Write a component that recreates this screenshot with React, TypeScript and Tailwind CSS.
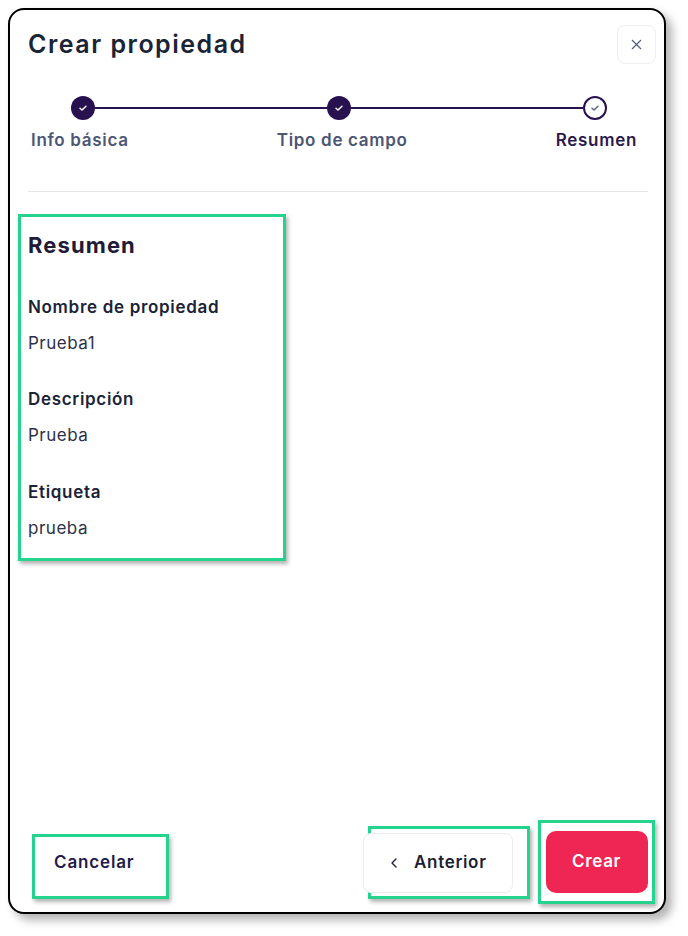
import { X, ChevronLeft } from 'lucide-react';

const font = { fontFamily: 'Inter, "Noto Sans", sans-serif' };

function Check({ className }: { className: string }) {
  return (
    <svg viewBox="0 0 12 12" className={className} fill="none">
      <path d="M3 6.2 5 8.1 9 4.2" stroke="currentColor" strokeWidth="1.4" strokeLinecap="round" strokeLinejoin="round" />
    </svg>
  );
}

function Stepper() {
  return (
    <div className="mt-[32px]">
      <div className="flex items-center pl-[43px] pr-[41px]">
        <div className="w-6 h-6 rounded-full bg-[#27124f] flex items-center justify-center text-white">
          <Check className="w-3 h-3" />
        </div>
        <div className="flex-1 h-[2px] bg-[#27124f]" />
        <div className="w-6 h-6 rounded-full bg-[#27124f] flex items-center justify-center text-white">
          <Check className="w-3 h-3" />
        </div>
        <div className="flex-1 h-[2px] bg-[#27124f]" />
        <div className="w-6 h-6 rounded-full border-2 border-[#27124f] bg-white flex items-center justify-center text-[#5b6380]">
          <Check className="w-3 h-3" />
        </div>
      </div>
      <div className="flex justify-between pl-[3px] pr-[11px] mt-[8px] text-[17px] font-semibold leading-6 tracking-[0.04em]">
        <span className="text-[#4d5673]">Info básica</span>
        <span className="text-[#4d5673]">Tipo de campo</span>
        <span className="text-[#2a1a4a]">Resumen</span>
      </div>
    </div>
  );
}

function Field({ label, value }: { label: string; value: string }) {
  return (
    <div className="mt-[36px]">
      <div className="text-[17px] leading-6 font-semibold text-[#1c2337] tracking-[0.04em]">{label}</div>
      <div className="mt-3 text-[17px] leading-6 text-[#2c3148] tracking-[0.03em]">{value}</div>
    </div>
  );
}

export default function App() {
  return (
    <div className="min-h-[936px] bg-white pt-2 pl-2" style={font}>
      <div className="w-[658px] h-[906px] border-2 border-black rounded-2xl bg-white shadow-[6px_6px_10px_rgba(0,0,0,0.3)] flex flex-col">
        <div className="flex-1 pl-[18px] pr-[16px] pt-[15px]">
          <div className="flex items-center justify-between">
            <h1 className="text-[25px] leading-[39px] font-semibold text-[#1a2436] tracking-[0.06em]">Crear propiedad</h1>
            <button className="w-[39px] h-[39px] -mr-2 rounded-lg border border-[#eeeeee] flex items-center justify-center text-[#4b5b82]">
              <X size={17} strokeWidth={1.6} />
            </button>
          </div>

          <Stepper />

          <div className="mt-[39px] h-px bg-[#e4e4e7]" />

          <div className="mt-[22px] -ml-[10px] w-[268px] border-[3px] border-[#24d48e] shadow-[2px_3px_4px_rgba(0,0,0,0.3)] pl-[7px] pt-[14px] pb-[18px]">
            <h2 className="text-[22px] leading-7 font-bold text-[#221b36] tracking-[0.05em]">Resumen</h2>
            <Field label="Nombre de propiedad" value="Prueba1" />
            <div className="-mt-1">
              <Field label="Descripción" value="Prueba" />
            </div>
            <div className="-mt-[3px]">
              <Field label="Etiqueta" value="prueba" />
            </div>
          </div>
        </div>

        <div className="flex items-center justify-between pl-[22px] pr-[9px] pb-[8px]">
          <div className="w-[137px] h-[65px] border-[3px] border-[#24d48e] shadow-[2px_3px_4px_rgba(0,0,0,0.3)] pl-[19px] pt-[13px] mt-[8px]">
            <span className="text-[17px] leading-6 font-semibold text-[#231a4a] tracking-[0.05em]">Cancelar</span>
          </div>
          <div className="flex items-center gap-2">
            <div className="w-[162px] h-[73px] border-[3px] border-[#24d48e] shadow-[2px_3px_4px_rgba(0,0,0,0.3)] flex items-center">
              <button className="-ml-2 mt-[2px] w-[150px] h-[60px] rounded-lg border border-[#ececec] bg-white flex items-center pl-[22px] text-[#1c1f33]">
                <ChevronLeft size={16} strokeWidth={2} />
                <span className="ml-[12px] text-[17px] font-semibold tracking-[0.04em]">Anterior</span>
              </button>
            </div>
            <div className="w-[117px] h-[84px] border-[3px] border-[#24d48e] shadow-[2px_3px_4px_rgba(0,0,0,0.3)] flex items-center justify-center">
              <button className="w-[102px] h-[62px] rounded-[10px] bg-[#ef2554] text-white text-[17px] font-semibold tracking-[0.04em]">
                Crear
              </button>
            </div>
          </div>
        </div>
      </div>
    </div>
  );
}
